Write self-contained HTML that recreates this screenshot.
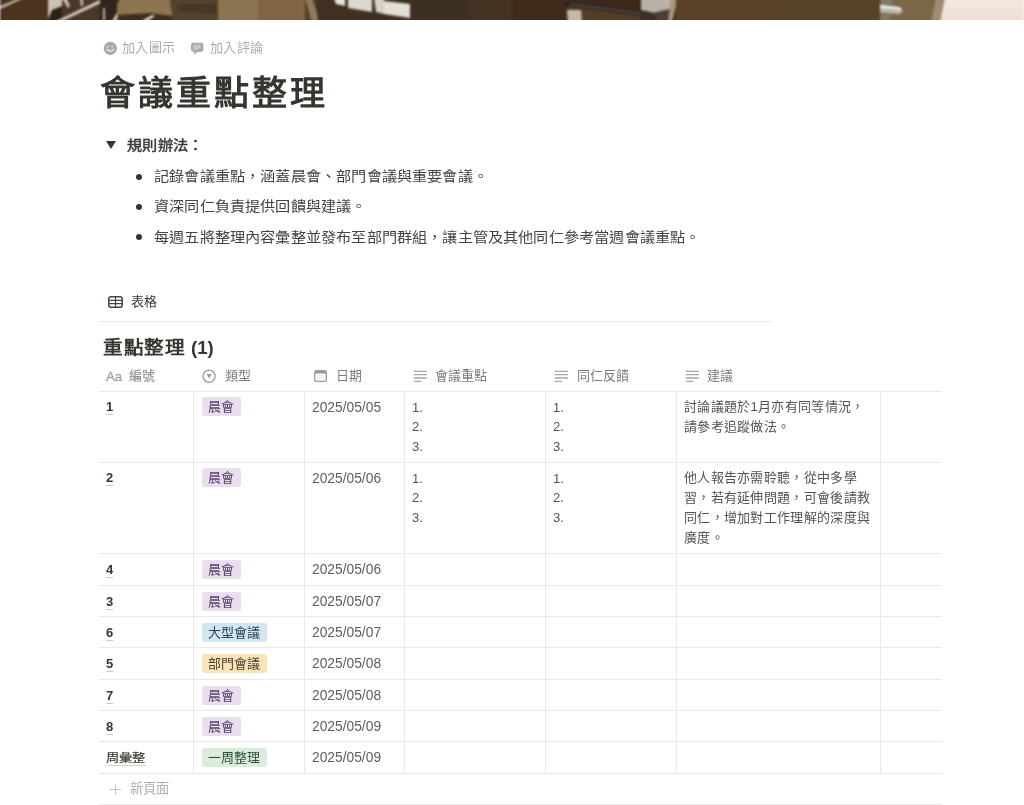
<!DOCTYPE html>
<html lang="zh-TW"><head><meta charset="utf-8">
<style>
html,body{margin:0;padding:0;background:#fff;}
body{width:1024px;height:805px;overflow:hidden;position:relative;will-change:transform;font-family:"Liberation Sans",sans-serif;color:#37352f;}
.abs{position:absolute;white-space:nowrap;}
#cover{position:absolute;left:0;top:0;width:1024px;height:20px;overflow:hidden;}
.meta{color:rgba(55,53,47,0.42);font-size:13px;letter-spacing:0.3px;}
h1{position:absolute;margin:0;left:100px;top:68px;font-size:35px;font-weight:700;line-height:50px;white-space:nowrap;letter-spacing:3.1px;}
.t15{font-size:15.2px;letter-spacing:0.18px;color:#45433e;}
.sy{display:inline-block;transform:scaleY(0.92);transform-origin:50% 85%;}
.bullet{position:absolute;width:6px;height:6px;border-radius:50%;background:#37352f;}
.hline{position:absolute;height:1px;background:#e9e9e7;}
.vline{position:absolute;width:1px;background:#e9e9e7;}
.hd{position:absolute;top:365.5px;font-size:13px;color:rgba(55,53,47,0.65);white-space:nowrap;line-height:20px;}
.cell{position:absolute;font-size:13.5px;line-height:20px;white-space:nowrap;}
.num{font-weight:700;font-size:13px;text-decoration:underline;text-decoration-color:rgba(55,53,47,0.25);text-underline-offset:3px;}
.date{color:#5f5d58;font-size:13.8px;}
.ml{font-size:13px;line-height:19.8px;color:#55534e;}
.sug{font-size:13px;line-height:20px;color:#55534e;letter-spacing:0.3px;}
.tag{position:absolute;height:19px;line-height:19px;border-radius:3px;padding:0 6.5px 0 6.5px;font-size:13px;white-space:nowrap;}
.pur{background:rgb(232,222,238);color:rgb(88,62,108);}
.blu{background:rgb(211,229,239);color:rgb(42,68,88);}
.yel{background:rgb(249,228,186);color:rgb(84,64,44);}
.grn{background:rgb(219,236,220);color:rgb(48,78,60);}
</style></head><body>
<div id="cover"><svg style="position:absolute;left:0;top:-2px;filter:blur(0.8px)" width="1024" height="24" viewBox="0 -2 1024 24">
<defs><filter id="bl" x="-5%" y="-50%" width="110%" height="200%"><feGaussianBlur stdDeviation="0.7"/></filter>
<linearGradient id="wood" x1="0" x2="1"><stop offset="0" stop-color="#4c3520"/><stop offset="0.3" stop-color="#5a3f24"/><stop offset="1" stop-color="#634628"/></linearGradient>
<linearGradient id="beige" x1="0" x2="0" y1="0" y2="1"><stop offset="0" stop-color="#f3e9e2"/><stop offset="1" stop-color="#efe0d2"/></linearGradient>
</defs>
<g>
<rect x="-2" y="-2" width="1030" height="24" fill="#5a3e22"/>
<rect x="-2" y="-2" width="52" height="24" fill="#4d321d"/>
<path d="M-2 7 L20 -2 L24 -2 L-2 10z" fill="#cdc8c0"/>
<path d="M48 -2 L62 -2 L62 8 L52 12 L48 20z" fill="#cbc3b4"/>
<path d="M47 22 L52 10 L62 6 L64 22z" fill="#2b2218"/>
<rect x="62" y="-2" width="40" height="24" fill="#4a3826"/>
<path d="M54 22 L100 0 L103 2 L60 22z" fill="#d6d2cb"/>
<path d="M62 -2 L66 -2 L70 6 L68 8z" fill="#d0ccc4"/>
<path d="M80 -2 L83 -2 L83 6 L81 6z" fill="#c8c4bc"/>
<rect x="100" y="-2" width="18" height="24" fill="#30261b"/>
<path d="M112 22 L121 5 L123 6 L115 22z" fill="#dedad2"/>
<path d="M103 8 L105 8 L105 22 L103 22z" fill="#b8b4ac"/>
<path d="M117 22 L117 6 Q118 -2 124 -2 L130 -2 L130 22z" fill="#8a7350"/>
<rect x="128" y="-2" width="44" height="24" fill="#8c754f"/>
<path d="M118 15 L150 13 L172 16 L172 22 L118 22z" fill="#3e2c1e"/>
<path d="M140 22 L152 15 L155 16 L146 22z" fill="#e0dcd4"/>
<path d="M170 -2 L218 -2 L222 22 L175 22 Q170 10 170 -2z" fill="#52432f"/>
<path d="M176 4 L215 4 L218 14 L180 12z" fill="#453826"/>
<rect x="218" y="-2" width="87" height="24" fill="#7f6541"/>
<rect x="218" y="-2" width="40" height="24" fill="#8c7450"/>
<path d="M305 -2 L312 -2 L320 22 L312 22z" fill="#8d7d5e"/>
<path d="M316 -2 L410 -2 L410 22 L318 22z" fill="#3f3022"/>
<path d="M334 -2 L345 -2 L345 6 L336 4z" fill="#e8e4dc"/>
<path d="M348 -2 L372 -2 L372 12 L348 8z" fill="#ddd8ce"/>
<path d="M374 -2 L384 -2 L384 14 L376 12z" fill="#d5d0c8"/>
<path d="M384 1 L410 4 L410 18 L384 14z" fill="#e3ded6"/>
<rect x="410" y="-2" width="102" height="24" fill="#3d2f22"/>
<rect x="470" y="-2" width="42" height="24" fill="#443323"/>
<rect x="512" y="-2" width="54" height="24" fill="#3f2b1b"/>
<rect x="566" y="-2" width="76" height="24" fill="#543c26"/>
<path d="M566 -2 L642 -2 L642 12 L566 2z" fill="#3a2818"/>
<path d="M564 4 Q565 1 569 2 L642 12 L642 16 L568 6 L567 9z" fill="#2a2420"/>
<path d="M570 4 L640 13.5" stroke="#8a8680" stroke-width="0.7"/>
<path d="M567 10 L581 10 L582 22 L568 22z" fill="#c2baa8"/>
<rect x="640" y="-2" width="36" height="24" fill="#3a3028"/>
<path d="M641 -2 L672 -2 L670 12 L660 14 L641 10z" fill="#b9b1a5"/>
<path d="M652 13 L670 9 L671 22 L660 22z" fill="#4a4038"/>
<path d="M671 -2 L678 -2 L672 22 L668 22z" fill="#a89878"/>
<rect x="676" y="-2" width="205" height="24" fill="#5a4128"/>
<rect x="780" y="-2" width="100" height="24" fill="#58432a"/>
<rect x="880" y="-2" width="60" height="24" fill="#7c6648"/>
<path d="M881 -2 L893 -2 L890 22 L880 22z" fill="#7e7a66"/>
<path d="M880 5 L899 7 Q903 9 902 12 Q901 14 897 14 L880 12z" fill="#b8b8b0"/>
<path d="M880 5 L899 7 Q902 8 902 10 L880 8z" fill="#ecece8"/>
<path d="M936 -2 L946 -2 L940 22 L931 22z" fill="#a08c70"/>
<path d="M945 -2 L1026 -2 L1026 22 L940 22z" fill="url(#beige)"/>
</g></svg></div>

<!-- meta buttons -->
<svg class="abs" style="left:100px;top:38px" width="20" height="20" viewBox="0 0 20 20"><circle cx="10.3" cy="10.3" r="6.6" fill="#a9a9a8"/><circle cx="7.5" cy="8.7" r="1.1" fill="#d6d6d5"/><circle cx="12.2" cy="8.7" r="1.1" fill="#d6d6d5"/><path d="M7.1 11.6 Q10.3 14.6 13.5 11.6" stroke="#e2e2e1" stroke-width="1.7" fill="none" stroke-linecap="round"/></svg>
<div class="abs meta" style="left:122px;top:37.5px;line-height:20px;">加入圖示</div>
<svg class="abs" style="left:187px;top:38px" width="20" height="20" viewBox="0 0 20 20"><path d="M6.4 4.7H14a2.4 2.4 0 0 1 2.4 2.4V11.5a2.4 2.4 0 0 1-2.4 2.4H10.2L7.2 16.9V13.9H6.4a2.4 2.4 0 0 1-2.4-2.4V7.1a2.4 2.4 0 0 1 2.4-2.4z" fill="#a9a9a8"/><path d="M6.3 6.5h7.3v4.2h-2.4v1H6.3z" fill="#c8c8c7"/></svg>
<div class="abs meta" style="left:210px;top:37.5px;line-height:20px;">加入評論</div>

<h1><span style="display:inline-block;transform:scaleY(0.96);transform-origin:50% 78%;">會議重點整理</span></h1>

<!-- toggle -->
<svg class="abs" style="left:106px;top:141px" width="10" height="8" viewBox="0 0 10 8"><path d="M0 0h10L5 8z" fill="#37352f"/></svg>
<div class="abs t15" style="left:127px;top:135px;line-height:20px;font-weight:400;color:#37352f;-webkit-text-stroke:0.45px #37352f;letter-spacing:0.3px;"><span class="sy">規則辦法：</span></div>

<div class="bullet" style="left:135.5px;top:174px"></div>
<div class="abs t15" style="left:154px;top:166px;line-height:20px;"><span class="sy">記錄會議重點，涵蓋晨會、部門會議與重要會議。</span></div>
<div class="bullet" style="left:135.5px;top:204px"></div>
<div class="abs t15" style="left:154px;top:196px;line-height:20px;"><span class="sy">資深同仁負責提供回饋與建議。</span></div>
<div class="bullet" style="left:135.5px;top:234px"></div>
<div class="abs t15" style="left:154px;top:227px;line-height:20px;"><span class="sy">每週五將整理內容彙整並發布至部門群組，讓主管及其他同仁參考當週會議重點。</span></div>

<!-- view tab -->
<svg class="abs" style="left:108.4px;top:296.4px" width="15" height="12" viewBox="0 0 15 12"><rect x="0.75" y="0.75" width="13.5" height="10.5" rx="2.2" fill="none" stroke="#46443f" stroke-width="1.5"/><path d="M7.5 1v10M1 4.3h13M1 7.7h13" stroke="#46443f" stroke-width="1.2"/></svg>
<div class="abs" style="left:131px;top:292px;font-size:13px;line-height:20px;">表格</div>
<div class="hline" style="left:99px;top:321px;width:673px;"></div>

<div class="abs" style="left:103px;top:333px;font-size:18.6px;font-weight:700;line-height:28px;"><span style="display:inline-block;font-size:19.6px;letter-spacing:0.7px;transform:scaleY(0.93);transform-origin:50% 75%;">重點整理</span> (1)</div>

<!-- header -->
<div class="hd" style="left:106px;top:366.5px;font-size:13.3px;color:rgba(55,53,47,0.38);-webkit-text-stroke:0.35px rgba(55,53,47,0.38);">Aa</div>
<div class="hd" style="left:128.7px;">編號</div>
<svg class="abs" style="left:202px;top:369px" width="14" height="14" viewBox="0 0 14 14"><circle cx="7.1" cy="7.2" r="6.05" fill="none" stroke="#9b9a97" stroke-width="1.3"/><path d="M4.6 5.1h5L7.1 9.5z" fill="#9b9a97"/></svg>
<div class="hd" style="left:225px;">類型</div>
<svg class="abs" style="left:314px;top:370px" width="13" height="12" viewBox="0 0 13 12"><rect x="0.65" y="0.65" width="11.7" height="10.7" rx="2" fill="none" stroke="#9b9a97" stroke-width="1.3"/><path d="M0.65 2.65a2 2 0 0 1 2-2h7.7a2 2 0 0 1 2 2v0.9h-11.7z" fill="#9b9a97"/><path d="M3 5.5h7M3 7.5h7M3 9.3h5" stroke="#e4e3e1" stroke-width="0.6"/></svg>
<div class="hd" style="left:335.5px;">日期</div>
<svg class="abs" style="left:413px;top:370px" width="14" height="13" viewBox="0 0 14 13"><path d="M0.7 1.3h13.2M0.7 4.65h13.2M0.7 8h13.2M0.7 11.4h7.4" stroke="#a8a7a4" stroke-width="1.3"/></svg>
<div class="hd" style="left:435px;">會議重點</div>
<svg class="abs" style="left:553.5px;top:370px" width="14" height="13" viewBox="0 0 14 13"><path d="M0.7 1.3h13.2M0.7 4.65h13.2M0.7 8h13.2M0.7 11.4h7.4" stroke="#a8a7a4" stroke-width="1.3"/></svg>
<div class="hd" style="left:577px;">同仁反饋</div>
<svg class="abs" style="left:684.7px;top:370px" width="14" height="13" viewBox="0 0 14 13"><path d="M0.7 1.3h13.2M0.7 4.65h13.2M0.7 8h13.2M0.7 11.4h7.4" stroke="#a8a7a4" stroke-width="1.3"/></svg>
<div class="hd" style="left:707px;">建議</div>

<!-- table lines -->
<div class="hline" style="left:99px;top:391px;width:843px;"></div>
<div class="hline" style="left:99px;top:462px;width:843px;"></div>
<div class="hline" style="left:99px;top:553px;width:843px;"></div>
<div class="hline" style="left:99px;top:585px;width:843px;"></div>
<div class="hline" style="left:99px;top:616px;width:843px;"></div>
<div class="hline" style="left:99px;top:647px;width:843px;"></div>
<div class="hline" style="left:99px;top:679px;width:843px;"></div>
<div class="hline" style="left:99px;top:710px;width:843px;"></div>
<div class="hline" style="left:99px;top:741px;width:843px;"></div>
<div class="hline" style="left:99px;top:773px;width:843px;"></div>
<div class="hline" style="left:99px;top:804px;width:843px;"></div>

<div class="vline" style="left:193px;top:392px;height:381px;"></div>
<div class="vline" style="left:304px;top:392px;height:381px;"></div>
<div class="vline" style="left:404px;top:392px;height:381px;"></div>
<div class="vline" style="left:545px;top:392px;height:381px;"></div>
<div class="vline" style="left:676px;top:392px;height:381px;"></div>
<div class="vline" style="left:880px;top:392px;height:381px;"></div>

<!-- rows -->
<div class="cell num" style="left:106px;top:397px;">1</div>
<div class="tag pur" style="left:201.5px;top:397px;">晨會</div>
<div class="cell date" style="left:312px;top:397.6px;">2025/05/05</div>
<div class="cell ml" style="left:412px;top:397.6px;">1.<br>2.<br>3.</div>
<div class="cell ml" style="left:553px;top:397.6px;">1.<br>2.<br>3.</div>
<div class="cell sug" style="left:684px;top:397px;">討論議題於1月亦有同等情況，<br>請參考追蹤做法。</div>
<div class="cell num" style="left:106px;top:468px;">2</div>
<div class="tag pur" style="left:201.5px;top:468px;">晨會</div>
<div class="cell date" style="left:312px;top:468.6px;">2025/05/06</div>
<div class="cell ml" style="left:412px;top:468.6px;">1.<br>2.<br>3.</div>
<div class="cell ml" style="left:553px;top:468.6px;">1.<br>2.<br>3.</div>
<div class="cell sug" style="left:684px;top:468px;">他人報告亦需聆聽，從中多學<br>習，若有延伸問題，可會後請教<br>同仁，增加對工作理解的深度與<br>廣度。</div>
<div class="cell num" style="left:106px;top:559.5px;">4</div>
<div class="tag pur" style="left:201.5px;top:559.5px;">晨會</div>
<div class="cell date" style="left:312px;top:560.1px;">2025/05/06</div>
<div class="cell num" style="left:106px;top:591.5px;">3</div>
<div class="tag pur" style="left:201.5px;top:591.5px;">晨會</div>
<div class="cell date" style="left:312px;top:592.1px;">2025/05/07</div>
<div class="cell num" style="left:106px;top:622.5px;">6</div>
<div class="tag blu" style="left:201.5px;top:622.5px;">大型會議</div>
<div class="cell date" style="left:312px;top:623.1px;">2025/05/07</div>
<div class="cell num" style="left:106px;top:653.5px;">5</div>
<div class="tag yel" style="left:201.5px;top:653.5px;">部門會議</div>
<div class="cell date" style="left:312px;top:654.1px;">2025/05/08</div>
<div class="cell num" style="left:106px;top:685.5px;">7</div>
<div class="tag pur" style="left:201.5px;top:685.5px;">晨會</div>
<div class="cell date" style="left:312px;top:686.1px;">2025/05/08</div>
<div class="cell num" style="left:106px;top:716.5px;">8</div>
<div class="tag pur" style="left:201.5px;top:716.5px;">晨會</div>
<div class="cell date" style="left:312px;top:717.1px;">2025/05/09</div>
<div class="cell" style="left:106px;top:748px;font-weight:400;-webkit-text-stroke:0.2px #37352f;font-size:13.3px;letter-spacing:0.2px;"><span style="display:inline-block;transform:scaleY(0.85);transform-origin:50% 80%;">周彙整</span></div>
<div class="hline" style="left:106px;top:765px;width:40px;background:rgba(55,53,47,0.22);"></div>
<div class="tag grn" style="left:201.5px;top:747.5px;">一周整理</div>
<div class="cell date" style="left:312px;top:748.1px;">2025/05/09</div>
<!-- newpage -->
<svg class="abs" style="left:110px;top:784px" width="11" height="11" viewBox="0 0 11 11"><path d="M5.5 0v11M0 5.5h11" stroke="#c4c3c0" stroke-width="1.1"/></svg>
<div class="abs" style="left:130px;top:779px;font-size:13.2px;line-height:20px;color:rgba(55,53,47,0.4);">新頁面</div>
</body></html>
